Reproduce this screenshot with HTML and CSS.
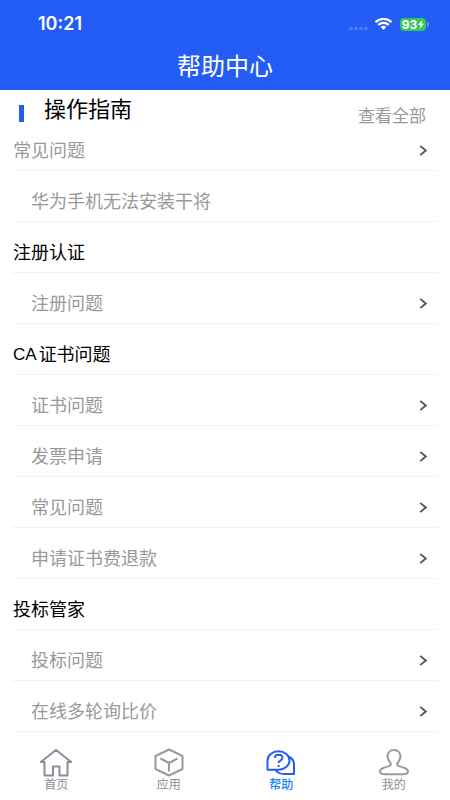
FILE: index.html
```html
<!DOCTYPE html>
<html lang="zh-CN">
<head>
<meta charset="utf-8">
<meta name="viewport" content="width=device-width, initial-scale=1">
<title>帮助中心</title>
<link rel="stylesheet" href="styles.css">
</head>
<body>
<header class="header">
  <div class="status">
    <time class="clock">10:21</time>
    <div class="indicators">
      <span class="signal"><i></i><i></i><i></i><i></i></span>
      <svg class="wifi" viewBox="0 0 18 12" aria-hidden="true">
        <path d="M1 4.100a11.500 11.500 0 0 1 16 0M3.800 7a7.400 7.400 0 0 1 10.400 0" fill="none" stroke="#fff" stroke-width="2.200"/>
        <path d="M9 12 6.100 9.100a4.100 4.100 0 0 1 5.800 0z" fill="#fff"/>
      </svg>
      <span class="battery">93<svg viewBox="0 0 6 9" aria-hidden="true"><path d="M4.400 0 0 5h2.500L1.600 9 6 3.800H3.500z" fill="#fff"/></svg></span>
    </div>
  </div>
  <h1 class="title">帮助中心</h1>
</header>
<main class="content">
  <div class="guide">
    <h2 class="guide-title">操作指南</h2>
    <a class="all" href="#all">查看全部</a>
  </div>
  <ul class="list">
    <li><a class="row top" href="#faq">常见问题<svg class="arrow" viewBox="0 0 8 12"><path d="m1 1 6 5-6 5"/></svg></a></li>
    <li><a class="row" href="#huawei">华为手机无法安装干将</a></li>
    <li><h3 class="row group">注册认证</h3></li>
    <li><a class="row" href="#register">注册问题<svg class="arrow" viewBox="0 0 8 12"><path d="m1 1 6 5-6 5"/></svg></a></li>
    <li><h3 class="row group"><span class="latin">CA</span>证书问题</h3></li>
    <li><a class="row" href="#cert">证书问题<svg class="arrow" viewBox="0 0 8 12"><path d="m1 1 6 5-6 5"/></svg></a></li>
    <li><a class="row" href="#invoice">发票申请<svg class="arrow" viewBox="0 0 8 12"><path d="m1 1 6 5-6 5"/></svg></a></li>
    <li><a class="row" href="#cert-faq">常见问题<svg class="arrow" viewBox="0 0 8 12"><path d="m1 1 6 5-6 5"/></svg></a></li>
    <li><a class="row" href="#refund">申请证书费退款<svg class="arrow" viewBox="0 0 8 12"><path d="m1 1 6 5-6 5"/></svg></a></li>
    <li><h3 class="row group">投标管家</h3></li>
    <li><a class="row" href="#bid">投标问题<svg class="arrow" viewBox="0 0 8 12"><path d="m1 1 6 5-6 5"/></svg></a></li>
    <li><a class="row" href="#quote">在线多轮询比价<svg class="arrow" viewBox="0 0 8 12"><path d="m1 1 6 5-6 5"/></svg></a></li>
  </ul>
</main>
<nav class="tabs">
  <a class="tab" href="#home">
    <svg class="home" viewBox="0 0 34 30"><path d="M5.500 15H1.800L17 3l15.200 12h-3.700V28.500h-8V19.500h-6.500v9H5.500z"/></svg>
    <span>首页</span>
  </a>
  <a class="tab" href="#apps">
    <svg viewBox="0 0 34 30"><path d="M17 2.500 30.500 9v13L17 28.500 3.500 22V9zM8.500 11.500 17 16l8.500-4.500M17 16v8.500"/></svg>
    <span>应用</span>
  </a>
  <a class="tab active" href="#help" aria-current="page">
    <svg viewBox="0 0 34 30"><path d="M3.500 22.800V13.500a11 9.300 0 1 1 11 9.300z"/><path d="M24.500 9.500c3.500 1.500 5.500 4.500 5.500 8v9.500H20c-4 0-6.500-1.500-8.500-4"/><path d="M10.800 11c0-2.200 1.600-3.300 3.800-3.300s3.800 1.200 3.800 3.100c0 2.800-3.800 2.800-3.800 5.200M14.600 18v2"/></svg>
    <span>帮助</span>
  </a>
  <a class="tab" href="#mine">
    <svg viewBox="0 0 34 30"><path d="M17 3c-4 0-6.500 2.800-6.500 6.600 0 2.700 1.500 4.400 2.800 6 1 1.400.6 2.900-1.200 3.500C7.500 20.300 3 21.500 3 24.500 3 26.500 5 27.300 8 27.300h18c3 0 5-.8 5-2.800 0-3-4.500-4.200-9.100-5.400-1.800-.6-2.200-2.100-1.200-3.500 1.300-1.600 2.800-3.300 2.800-6C23.500 5.800 21 3 17 3z"/></svg>
    <span>我的</span>
  </a>
</nav>
</body>
</html>
```

FILE: styles.css
```css
* { box-sizing: border-box; }
body {
  margin: 0;
  min-height: 100vh;
  display: flex;
  flex-direction: column;
  background: #fff;
  color: #000;
  font-family: "Liberation Sans", "Noto Sans CJK SC", sans-serif;
}
a { color: inherit; text-decoration: none; }
h1, h2, h3, ul { margin: 0; padding: 0; font-weight: 400; }
ul { list-style: none; }

.header { background: #245df5; color: #fff; height: 90px; }
.status {
  display: flex;
  justify-content: space-between;
  align-items: center;
  height: 48px;
  padding: 0 22px 0 38px;
}
.clock { font: 600 18px/20px Inter, sans-serif; }
.indicators { display: flex; align-items: center; }
.signal { display: flex; gap: 1px; margin: 8px 6px 0 0; }
.signal i { width: 4px; height: 3px; border-radius: 2px; background: #527ff8; }
.wifi { width: 19px; height: 12px; margin-right: 7px; }
.battery {
  position: relative;
  display: flex;
  align-items: center;
  justify-content: center;
  gap: 1px;
  width: 26px;
  height: 13px;
  margin-right: 2px;
  border-radius: 4px;
  background: #35c759;
  font: 700 12px/13px Inter, sans-serif;
}
.battery svg { width: 6px; height: 9px; }
.battery::after {
  content: "";
  position: absolute;
  left: 27px;
  top: 4px;
  width: 2px;
  height: 5px;
  border-radius: 0 2px 2px 0;
  background: #6b90f8;
}
.title { font-size: 24px; line-height: 37px; text-align: center; }

.content { flex: 1; }
.guide {
  display: flex;
  align-items: flex-start;
  height: 30px;
  padding: 0 24px 0 19px;
}
.guide::before {
  content: "";
  width: 5px;
  height: 17px;
  margin: 15px 20px 0 0;
  background: #245df5;
}
.guide-title { font-size: 22px; line-height: 40px; }
.all {
  margin: 14px 0 0 auto;
  color: #999;
  font-size: 17px;
  line-height: 26px;
}
.list { padding: 0 12px; }
.row {
  display: flex;
  align-items: center;
  height: 51px;
  padding: 12px 11px 0 19px;
  border-bottom: 1px solid #f3f3f3;
  color: #999;
  font-size: 18px;
  line-height: 26px;
}
.top { padding-left: 1px; }
.group { padding-left: 1px; color: #000; }
.latin { margin-right: 2px; font-size: 17px; }
.arrow {
  width: 8px;
  height: 11px;
  margin: 0 0 2px auto;
  fill: none;
  stroke: #555;
  stroke-width: 2;
}

.tabs { display: flex; height: 68px; padding-top: 15px; }
.tab {
  flex: 1;
  display: flex;
  flex-direction: column;
  align-items: center;
  color: #8c8c8c;
  font-size: 12px;
  line-height: 17px;
}
.tab svg {
  width: 34px;
  height: 30px;
  fill: none;
  stroke: #999;
  stroke-width: 2;
  stroke-linejoin: round;
}
.tab .home { stroke: #858e9d; }
.active { color: #1684f8; font-weight: 500; }
.active svg { stroke: #245df5; }
```
